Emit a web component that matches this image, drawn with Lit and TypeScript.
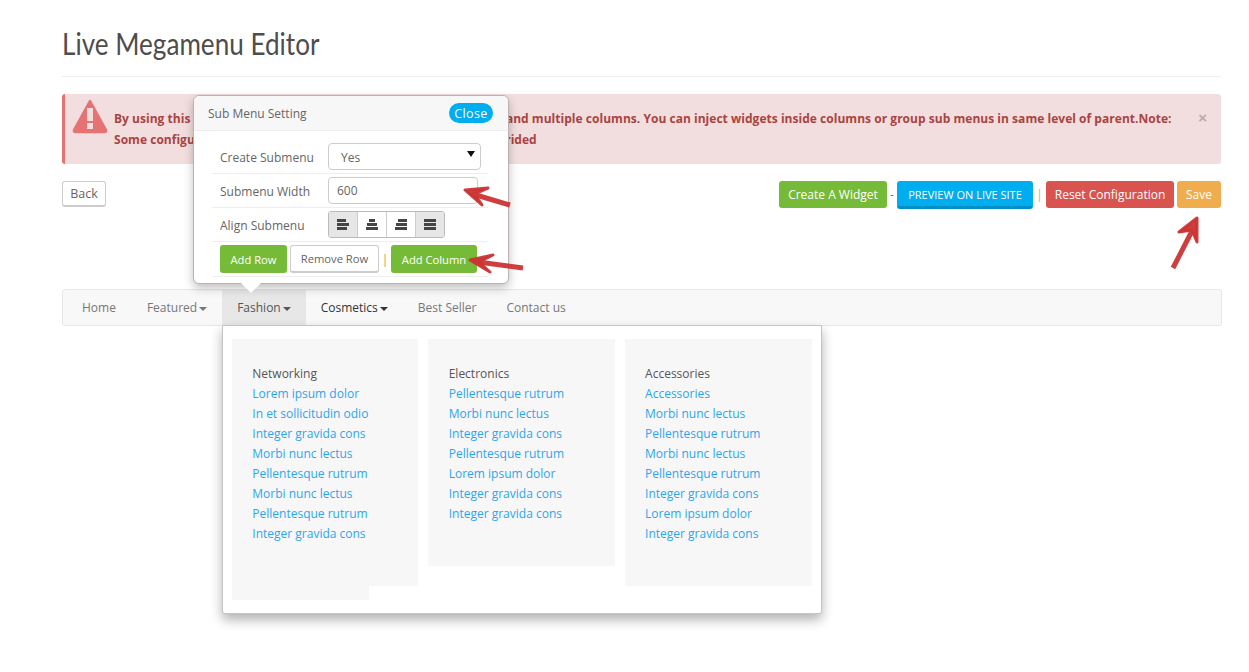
import { LitElement, html, css, svg } from "lit";
import { customElement } from "lit/decorators.js";

const columns = [
  { title: "Networking", extra: true, links: ["Lorem ipsum dolor", "In et sollicitudin odio", "Integer gravida cons", "Morbi nunc lectus", "Pellentesque rutrum", "Morbi nunc lectus", "Pellentesque rutrum", "Integer gravida cons"] },
  { title: "Electronics", extra: false, links: ["Pellentesque rutrum", "Morbi nunc lectus", "Integer gravida cons", "Pellentesque rutrum", "Lorem ipsum dolor", "Integer gravida cons", "Integer gravida cons"] },
  { title: "Accessories", extra: false, links: ["Accessories", "Morbi nunc lectus", "Pellentesque rutrum", "Morbi nunc lectus", "Pellentesque rutrum", "Integer gravida cons", "Lorem ipsum dolor", "Integer gravida cons"] },
];

const navItems = [
  { label: "Home" },
  { label: "Featured", caret: true },
  { label: "Fashion", caret: true, active: true },
  { label: "Cosmetics", caret: true, dark: true },
  { label: "Best Seller" },
  { label: "Contact us" },
];

const alignIcon = (bars: number[][]) => html`<svg width="12" height="11" viewBox="0 0 12 11">
  ${bars.map((b, i) => svg`<rect x=${b[0]} y=${i * 4} width=${b[1]} height="3" fill="#444"></rect>`)}
</svg>`;

@customElement("app-root")
export class AppRoot extends LitElement {
  static styles = css`
    :host { display: block; position: relative; height: 672px; overflow: hidden; background: #fff;
      font-family: "Open Sans", sans-serif; font-size: 12px; color: #666; }
    * { box-sizing: border-box; }
    .page { padding: 0 28px 0 62px; }
    .head { height: 77px; border-bottom: 1px solid #eee; display: flex; align-items: flex-start; }
    h1 { margin: 24px 0 0; font: 400 30px/38px "Lato", sans-serif; color: #4d4d4d; transform: scaleX(.87); transform-origin: left; white-space: nowrap; }
    .alert { margin-top: 17px; height: 70px; background: #f2dede; border-left: 3px solid #e57373; border-radius: 3px; display: flex; position: relative; padding: 0 40px 0 7px; }
    .alert-icon { flex: none; margin-top: 5px; width: 36px; height: 35px; }
    .alert-text { margin: 14px 0 0 6px; font-weight: 700; font-size: 12px; letter-spacing: .03px; line-height: 21px; color: #a94442; }
    .alert-close { position: absolute; right: 14px; top: 14px; font: 700 15px/20px "Liberation Sans", sans-serif; color: #bfa9a9; }
    .toolbar { margin-top: 17px; height: 28px; display: flex; align-items: flex-start; }
    .btn { display: inline-flex; align-items: center; justify-content: center; height: 27px; border-radius: 3px; font-size: 12px; color: #fff; border: 1px solid transparent; padding: 0 9px; white-space: nowrap; }
    .back { width: 44px; height: 26px; background: #fff; color: #666; border: 1px solid #ccc; border-bottom-width: 2px; padding: 0; font-size: 12.5px; }
    .spacer { flex: 1; }
    .green { background: #76bb37; }
    .blue { background: #00adee; border-bottom: 3px solid #0090c5; height: 28px; font-size: 11px; }
    .red { background: #d9534f; }
    .orange { background: #f0ad4e; }
    .sep { color: #777; font-size: 12px; text-align: center; line-height: 27px; }
    .w-create { width: 108px; } .w-preview { width: 136px; } .w-reset { width: 128px; } .w-save { width: 44px; margin-left: 3px; }
    .s1 { width: 10px; } .s2 { width: 13px; color: #e0a84e; }
    nav { margin: 80px -1px 0 0; height: 37px; background: #f8f8f8; border: 1px solid #e7e7e7; border-radius: 3px; display: flex; padding-left: 4px; }
    nav a { display: flex; align-items: center; padding: 0 15px; height: 35px; color: #777; white-space: nowrap; font-size: 12px; }
    nav a:first-child { padding-right: 16px; }
    nav a.active { background: #e7e7e7; color: #555; }
    nav a.dark { color: #333; }
    .caret { display: inline-block; margin-left: 2px; margin-top: 2px; border: 4px solid transparent; border-top-color: currentColor; border-bottom: 0; }
    .dropdown { position: absolute; left: 222px; top: 325px; width: 600px; height: 289px; background: #fff; border: 1px solid #c4c4c4; border-radius: 0 0 3px 3px; box-shadow: 0 6px 12px rgba(0,0,0,.3); padding: 13px 9px 0; display: flex; gap: 10px; align-items: flex-start; }
    .col { flex: 0 0 186.4px; }
    .col:last-child { flex: 1 1 0; }
    .col-body { background: #f8f7f7; padding: 25px 20px 42px 20.3px; line-height: 20px; font-size: 12px; }
    .col-title { color: #555; }
    .col a { display: block; color: #2aa6f0; white-space: nowrap; }
    .col-extra { width: 137px; height: 14px; background: #f8f7f7; }
    .pop { position: absolute; left: 193px; top: 95px; width: 316px; height: 189px; background: #fff; border: 1px solid #bcb2b2; border-radius: 6px; box-shadow: 0 4px 10px rgba(0,0,0,.25); }
    .pop::after { content: ""; position: absolute; left: 47px; bottom: -10px; width: 0; height: 0; border: 10px solid transparent; border-top-color: #fff; border-bottom: 0; }
    .pop-head { height: 35px; background: #f7f7f7; border-bottom: 1px solid #eee; border-radius: 6px 6px 0 0; display: flex; align-items: center; justify-content: space-between; padding: 0 15px 0 14px; font-size: 12px; color: #666; }
    .close { background: #00adee; color: #fff; width: 44px; height: 20px; border-radius: 10px; display: flex; align-items: center; justify-content: center; font-size: 12.5px; letter-spacing: .4px; }
    .pop-body { padding: 9px 20px 0 18px; font-size: 12px; }
    .row { height: 34px; border-bottom: 1px solid #eee; display: flex; align-items: center; padding-left: 8px; }
    .row label { width: 108px; flex: none; color: #666; padding-top: 2px; }
    .select, .input { height: 27px; border: 1px solid #ccc; border-radius: 4px; background: #fff; display: flex; align-items: center; color: #666; }
    .select { width: 153px; padding: 2px 0 0 12px; position: relative; }
    .select::after { content: ""; position: absolute; right: 5px; top: 7px; border: 4px solid transparent; border-top: 6px solid #111; border-bottom: 0; }
    .input { width: 150px; padding-left: 8px; }
    .group { display: flex; width: 117px; height: 27px; border: 1px solid #bbb; border-radius: 3px; overflow: hidden; }
    .group span { flex: 1; display: flex; align-items: center; justify-content: center; background: #fff; border-right: 1px solid #ccc; }
    .group span:last-child { border-right: 0; }
    .group span.on { background: #e6e6e6; }
    .actions { height: 35px; align-items: center; }
    .pbtn { height: 28px; font-size: 11.2px; padding: 0; }
    .p-add { width: 67px; } .p-col { width: 86px; }
    .p-rem { width: 89px; margin-left: 3px; background: #fff; color: #666; border: 1px solid #ccc; border-bottom-width: 2px; }
    .bar { width: 12px; text-align: center; color: #d0a050; font-size: 13px; }
    .arrows { position: absolute; inset: 0; width: 1249px; height: 672px; pointer-events: none; }
  `;

  render() {
    return html`
      <div class="page">
        <div class="head"><h1>Live Megamenu Editor</h1></div>
        <div class="alert">
          <svg class="alert-icon" viewBox="0 0 36 35">
            <path d="M18 2 L34 31 Q34.5 33 32.5 33 L3.500 33 Q1.500 33 2 31 Z" fill="#e57373" stroke="#e57373" stroke-width="2.500" stroke-linejoin="round"></path>
            <rect x="15" y="9" width="6" height="13" fill="#f2dede"></rect>
            <rect x="15" y="24" width="6" height="6" fill="#f2dede"></rect>
          </svg>
          <div class="alert-text">By using this tool you can create sub menus using multiple rows, and multiple columns. You can inject widgets inside columns or group sub menus in same level of parent.Note: Some configurations in the main global menu setting will be overrided</div>
          <span class="alert-close">×</span>
        </div>
        <div class="toolbar">
          <span class="btn back">Back</span>
          <span class="spacer"></span>
          <span class="btn green w-create">Create A Widget</span>
          <span class="sep s1">-</span>
          <span class="btn blue w-preview">PREVIEW ON LIVE SITE</span>
          <span class="sep s2">|</span>
          <span class="btn red w-reset">Reset Configuration</span>
          <span class="btn orange w-save">Save</span>
        </div>
        <nav>
          ${navItems.map((n) => html`<a class="${n.active ? "active" : ""} ${n.dark ? "dark" : ""}">${n.label}${n.caret ? html`<i class="caret"></i>` : ""}</a>`)}
        </nav>
      </div>

      <div class="dropdown">
        ${columns.map((c) => html`<div class="col">
          <div class="col-body">
            <div class="col-title">${c.title}</div>
            ${c.links.map((l) => html`<a>${l}</a>`)}
          </div>
          ${c.extra ? html`<div class="col-extra"></div>` : ""}
        </div>`)}
      </div>

      <div class="pop">
        <div class="pop-head"><span>Sub Menu Setting</span><span class="close">Close</span></div>
        <div class="pop-body">
          <div class="row"><label>Create Submenu</label><div class="select">Yes</div></div>
          <div class="row"><label>Submenu Width</label><div class="input">600</div></div>
          <div class="row"><label>Align Submenu</label>
            <div class="group">
              <span class="on">${alignIcon([[0, 9], [0, 12], [0, 10]])}</span>
              <span>${alignIcon([[3, 6], [1, 10], [0, 12]])}</span>
              <span>${alignIcon([[3, 9], [1, 11], [0, 12]])}</span>
              <span class="on">${alignIcon([[0, 12], [0, 12], [0, 12]])}</span>
            </div>
          </div>
          <div class="row actions">
            <span class="btn green pbtn p-add">Add Row</span>
            <span class="btn pbtn p-rem">Remove Row</span>
            <span class="bar">|</span>
            <span class="btn green pbtn p-col">Add Column</span>
          </div>
        </div>
      </div>

      <svg class="arrows" viewBox="0 0 1249 672">
        <g fill="#cb3434" stroke="#cb3434" stroke-width="5" stroke-linecap="butt" stroke-linejoin="round" fill-opacity=".95" stroke-opacity=".95">
          <path d="M476 195 L510 205" fill="none"></path>
          <path d="M465 190 L488 188 L474 194 L482 205 Z" stroke-width="3"></path>
          <path d="M478 262 L523 268" fill="none"></path>
          <path d="M470 260 L493 255 L479 262 L490 272 Z" stroke-width="3"></path>
          <path d="M1192 231 L1173 268" fill="none"></path>
          <path d="M1197 218 L1197 242 L1192 230 L1179 232 Z" stroke-width="3"></path>
        </g>
      </svg>
    `;
  }
}
